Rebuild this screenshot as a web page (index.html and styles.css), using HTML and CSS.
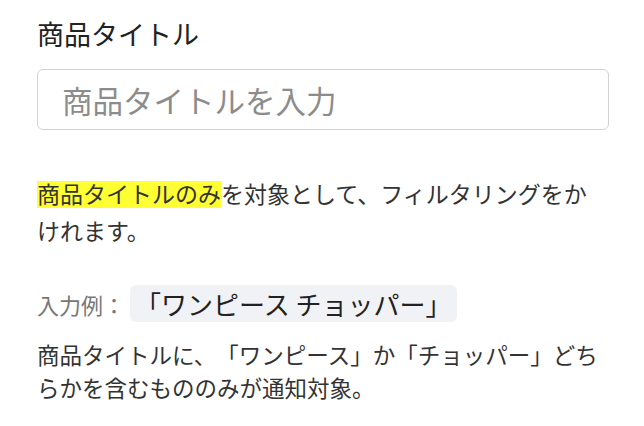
FILE: index.html
```html
<!DOCTYPE html>
<html lang="ja">
<head>
    <meta charset="UTF-8">
    <meta name="viewport" content="width=device-width, initial-scale=1.0">
    <title>商品タイトル</title>
    <link rel="stylesheet" href="styles.css">
</head>
<body>
    <div class="filter-field">
        <label class="field-label" for="title">商品タイトル</label>
        <input class="field-input" id="title" type="text" placeholder="商品タイトルを入力">

        <p class="field-note"><span class="mark">商品タイトルのみ</span>を対象として、フィルタリングをかけれます。</p>

        <div class="example-row">
            <span class="example-label">入力例：</span>
            <code class="example-chip">「ワンピース チョッパー」</code>
        </div>

        <p class="example-note">商品タイトルに、「ワンピース」か「チョッパー」どちらかを含むもののみが通知対象。</p>
    </div>
</body>
</html>
```

FILE: styles.css
```css
body {
    margin: 0;
    background-color: #ffffff;
    font-family: "Noto Sans CJK JP", "Noto Sans", sans-serif;
    color: #333;
    text-spacing-trim: space-all;
}
.filter-field {
    width: 572px;
    padding: 17px 0 0 37px;
}
.field-label {
    display: block;
    font-size: 27px;
    line-height: 34px;
    color: #222;
}
.field-input {
    display: block;
    box-sizing: border-box;
    width: 100%;
    height: 61px;
    margin-top: 18px;
    padding: 0 24px;
    border: 1px solid #d2d2d2;
    border-radius: 6px;
    font-family: inherit;
    font-size: 30.5px;
    color: #222;
    outline: none;
}
.field-input::placeholder {
    color: #8c8c8c;
}
.field-note {
    margin: 45px 0 0;
    font-size: 23px;
    line-height: 37px;
}
.mark {
    background: linear-gradient(transparent 4.5px, #ffff33 4.5px, #ffff33 31.5px, transparent 31.5px);
}
.example-row {
    display: flex;
    align-items: center;
    gap: 5px;
    margin-top: 36px;
}
.example-label {
    font-size: 22px;
    color: #777;
}
.example-chip {
    padding: 4px 5px;
    border-radius: 6px;
    background-color: #f1f2f5;
    font-family: inherit;
    font-size: 26px;
    line-height: 29px;
    color: #222;
}
.example-note {
    margin: 16px 0 0;
    font-size: 22.5px;
    line-height: 33px;
}
```
